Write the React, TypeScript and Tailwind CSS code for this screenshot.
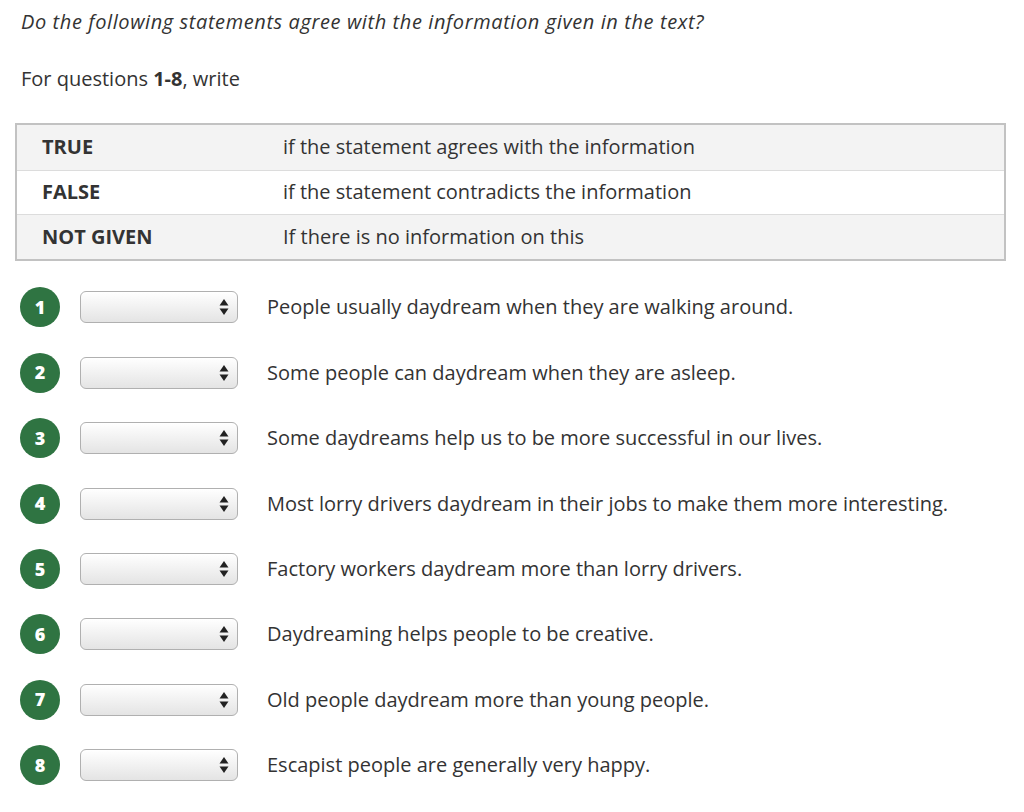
import React from 'react'

const font = { fontFamily: '"Open Sans", "Liberation Sans", sans-serif' }

const legend = [
  { key: 'TRUE', text: 'if the statement agrees with the information' },
  { key: 'FALSE', text: 'if the statement contradicts the information' },
  { key: 'NOT GIVEN', text: 'If there is no information on this' },
]

const questions = [
  'People usually daydream when they are walking around.',
  'Some people can daydream when they are asleep.',
  'Some daydreams help us to be more successful in our lives.',
  'Most lorry drivers daydream in their jobs to make them more interesting.',
  'Factory workers daydream more than lorry drivers.',
  'Daydreaming helps people to be creative.',
  'Old people daydream more than young people.',
  'Escapist people are generally very happy.',
]

const Arrows = () => (
  <svg className="pointer-events-none absolute right-[9px] top-1/2 -translate-y-1/2" width="10" height="18" viewBox="0 0 10 18">
    <path d="M5 1 L9.5 7.5 L0.5 7.5 Z" fill="#222" />
    <path d="M5 17 L9.5 10.5 L0.5 10.5 Z" fill="#222" />
  </svg>
)

const Question = ({ n, text }: { n: number; text: string }) => {
  const [value, setValue] = React.useState('')
  return (
    <div className="flex h-[65.4px] items-center">
      <div className="ml-[5px] flex h-[40px] w-[40px] shrink-0 items-center justify-center rounded-full bg-[#2f7442] text-[18px] font-extrabold text-white">
        {n}
      </div>
      <div className="relative ml-[20px] h-[32px] w-[158px] shrink-0">
        <select
          value={value}
          onChange={e => setValue(e.target.value)}
          className="h-full w-full appearance-none rounded-[6px] border border-[#b0b0b0] bg-gradient-to-b from-[#ffffff] to-[#e4e4e4] px-2 text-[15px] text-[#333] shadow-[inset_0_1px_0_#fff] outline-none"
        >
          <option value=""></option>
          <option value="TRUE">TRUE</option>
          <option value="FALSE">FALSE</option>
          <option value="NOT GIVEN">NOT GIVEN</option>
        </select>
        <Arrows />
      </div>
      <div className="ml-[29px] text-[20px] text-[#333]">{text}</div>
    </div>
  )
}

export default function App() {
  return (
    <div className="min-h-screen bg-white pl-[15px] pr-[18px] text-[#333]" style={font}>
      <p className="pl-[6px] pt-[8px] text-[20px] italic leading-[28px] tracking-[0.6px]">
        Do the following statements agree with the information given in the text?
      </p>
      <p className="mt-[29px] pl-[6px] text-[20px] leading-[28px]">
        For questions <b>1-8</b>, write
      </p>
      <div className="mt-[30px] border-2 border-[#c2c2c2]">
        {legend.map((row, i) => (
          <div
            key={row.key}
            className={`flex h-[44.6px] items-center text-[20px] ${i % 2 === 0 ? 'bg-[#f3f3f3]' : 'bg-white'} ${i > 0 ? 'border-t border-[#dcdcdc]' : ''}`}
          >
            <div className="w-[266px] pl-[25px] font-bold">{row.key}</div>
            <div>{row.text}</div>
          </div>
        ))}
      </div>
      <div className="mt-[14px]">
        {questions.map((q, i) => (
          <Question key={i} n={i + 1} text={q} />
        ))}
      </div>
    </div>
  )
}
